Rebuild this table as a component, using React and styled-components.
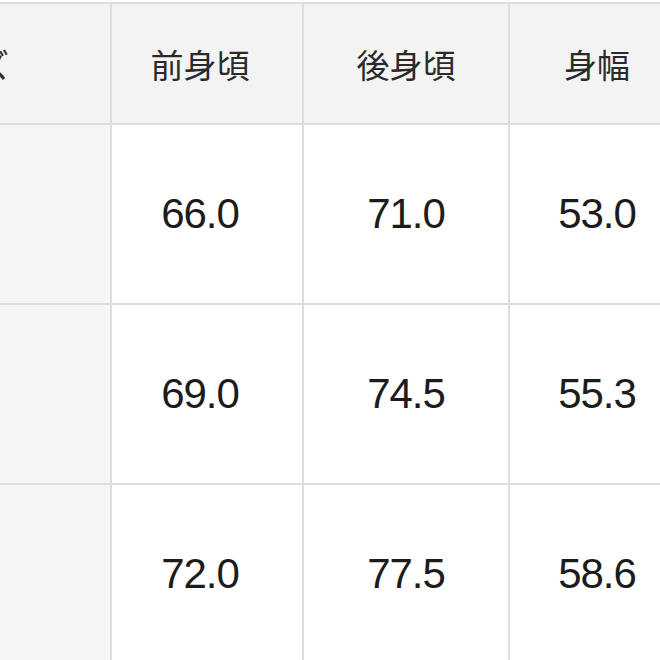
import React from "react";
import styled, { createGlobalStyle } from "styled-components";

const Global = createGlobalStyle`
  html, body {
    margin: 0;
    padding: 0;
    overflow: hidden;
    background: #ffffff;
  }
`;

const Page = styled.div`
  width: 660px;
  height: 660px;
  overflow: hidden;
  padding-top: 2px;
  box-sizing: border-box;
`;

const Table = styled.div`
  display: grid;
  grid-template-columns: 300px 190px 204px 174px;
  grid-template-rows: 119px 178px 178px 178px;
  gap: 2px;
  margin-left: -190px;
  width: max-content;
  background: #dddddd;
  border-top: 2px solid #dddddd;
`;

const Cell = styled.div`
  display: flex;
  align-items: center;
  justify-content: center;
  box-sizing: border-box;
  padding-right: ${(p) => p.$shift || 0}px;
  background: ${(p) => (p.$head ? "#f3f3f3" : p.$side ? "#f5f5f5" : "#ffffff")};
  color: ${(p) => (p.$head ? "#2a2a2a" : "#1c1c1c")};
  font-family: ${(p) =>
    p.$head
      ? '"Noto Sans CJK JP", "Noto Sans", sans-serif'
      : '"Liberation Sans", Arial, sans-serif'};
  font-size: ${(p) => (p.$head ? "33px" : "42px")};
  letter-spacing: ${(p) => (p.$head ? "0" : "-1px")};
  font-weight: 400;
  white-space: nowrap;
`;

const headers = ["サイズ", "前身頃", "後身頃", "身幅"];
const rows = [
  ["", "66.0", "71.0", "53.0"],
  ["", "69.0", "74.5", "55.3"],
  ["", "72.0", "77.5", "58.6"],
];
const shifts = [0, 14, 0, 0];

export default function App() {
  return (
    <Page>
      <Global />
      <Table>
        {headers.map((h, i) => (
          <Cell key={h} $head $shift={shifts[i]}>
            {h}
          </Cell>
        ))}
        {rows.map((r, ri) =>
          r.map((v, ci) => (
            <Cell key={`${ri}-${ci}`} $side={ci === 0} $shift={shifts[ci]}>
              {v}
            </Cell>
          ))
        )}
      </Table>
    </Page>
  );
}
